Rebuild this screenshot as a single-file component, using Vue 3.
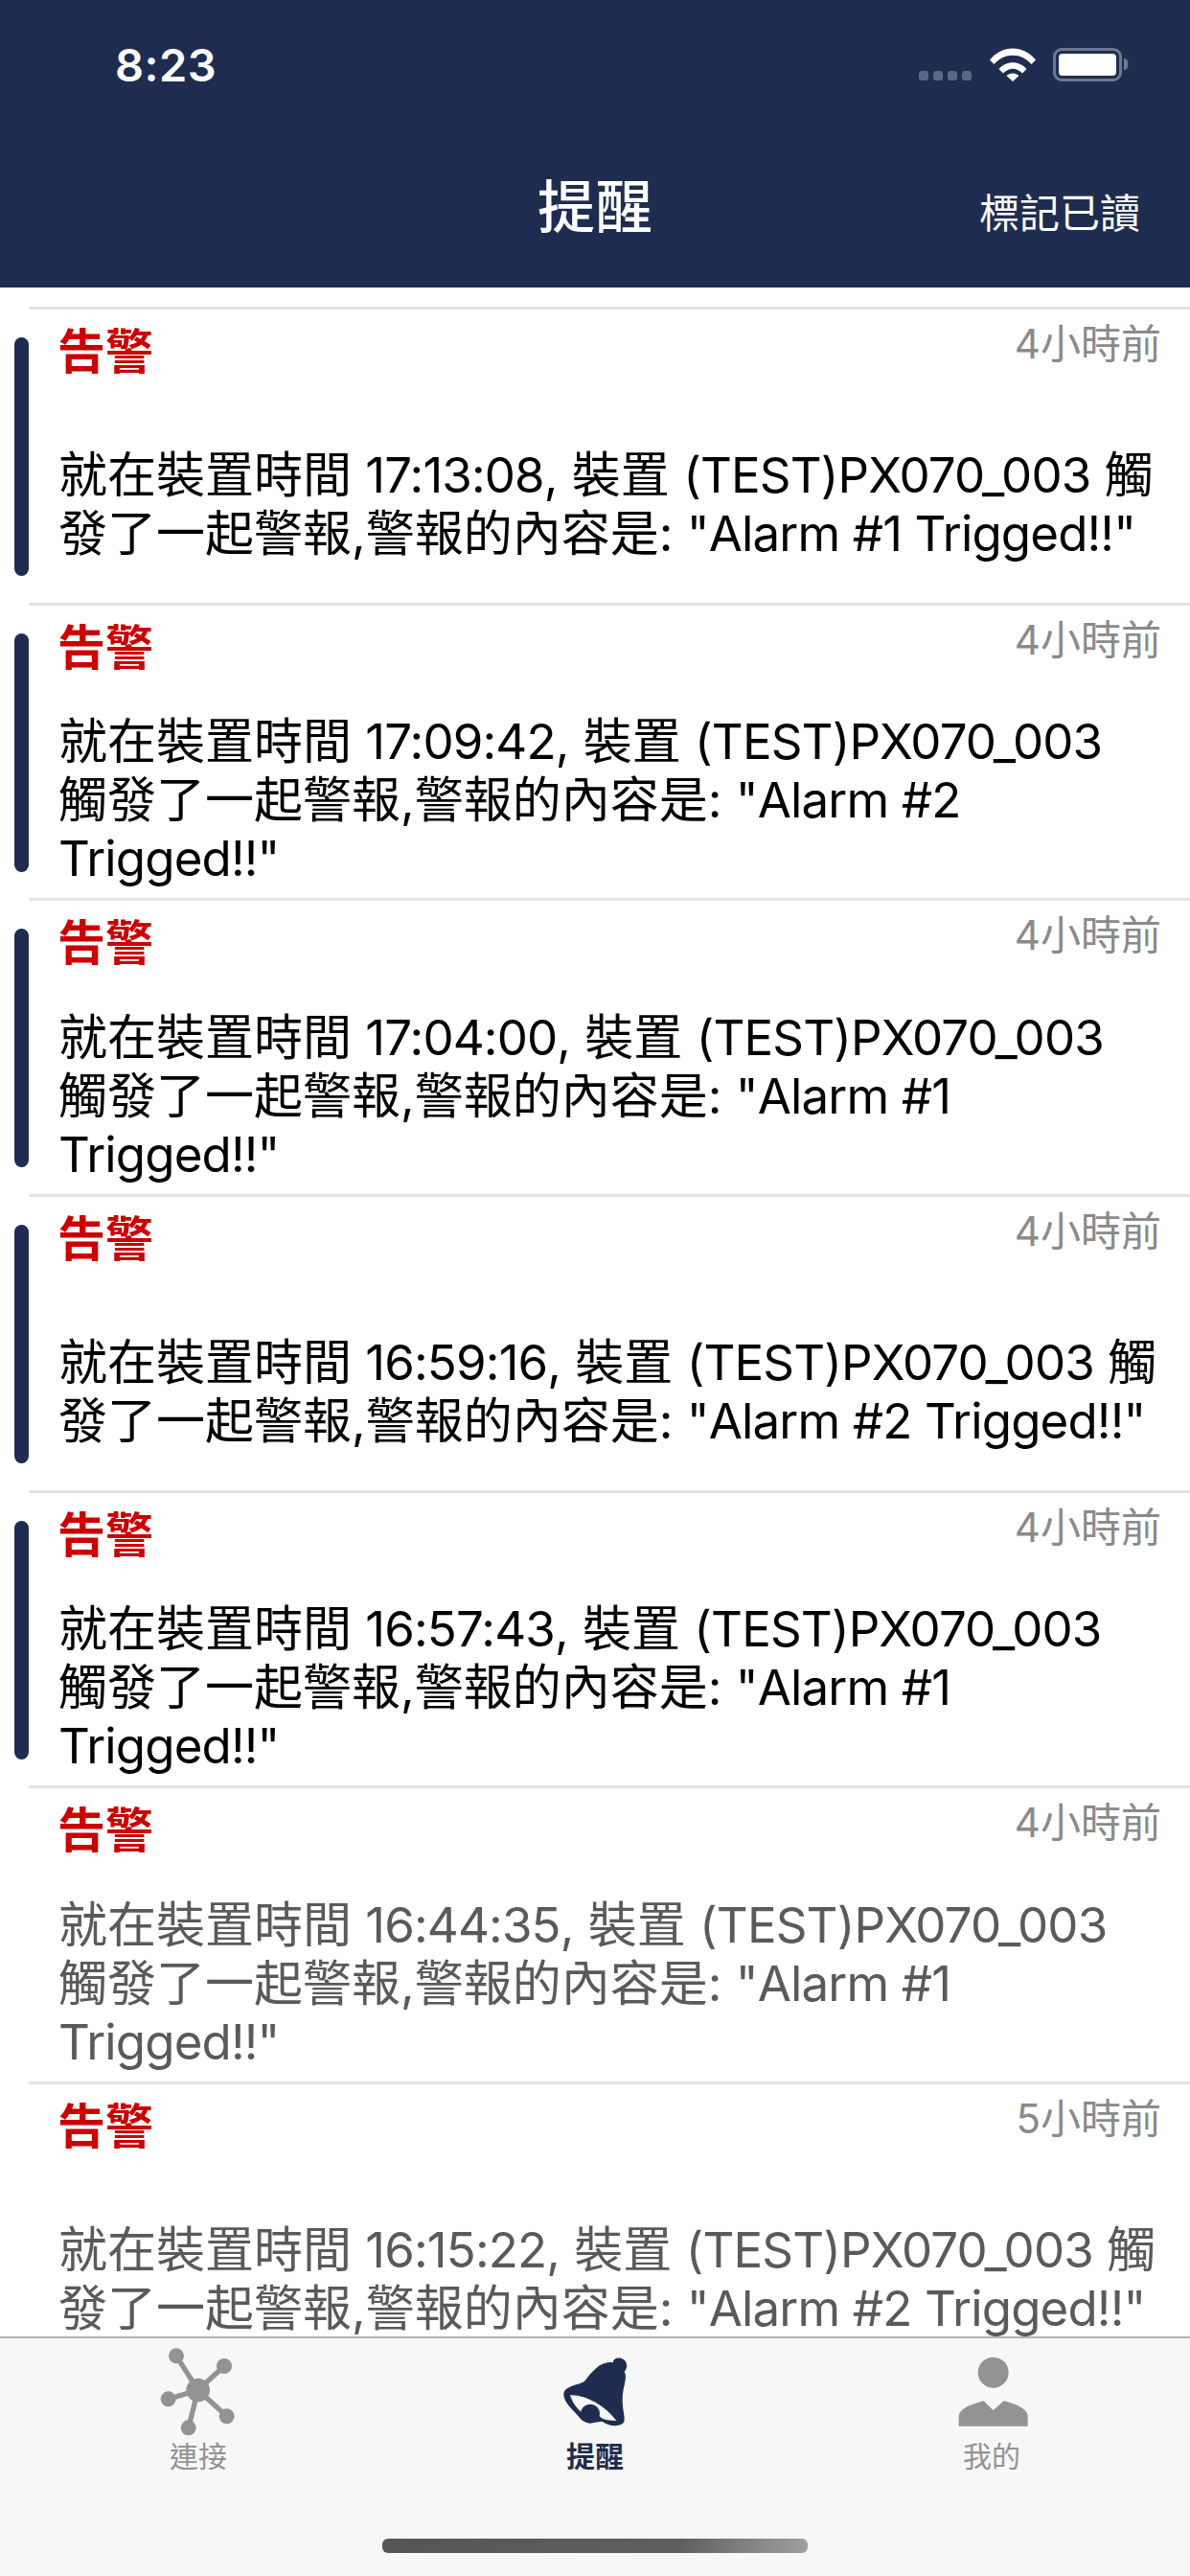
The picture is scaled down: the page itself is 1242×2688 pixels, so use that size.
<template>
  <div class="page">
    <header class="top">
      <div class="status">
        <span class="clock">8:23</span>
        <div class="status-icons">
          <div class="signal"><i></i><i></i><i></i><i></i></div>
          <svg class="wifi" width="48" height="35" viewBox="0 0 48 35">
            <path d="M0 12.5C13 -3.5 35 -3.5 48 12.5L43.5 17C33 4.5 15 4.5 4.500 17Z" fill="#fff" />
            <path d="M9.500 22C17 13 31 13 38.500 22L34 26.500C28 20 20 20 14 26.500Z" fill="#fff" />
            <path d="M17.500 29C21 25.500 27 25.500 30.500 29L24 35Z" fill="#fff" />
          </svg>
          <div class="battery"><div class="battery-fill"></div></div>
          <div class="battery-nub"></div>
        </div>
      </div>
      <div class="nav">
        <h1 class="nav-title">提醒</h1>
        <button class="nav-action">標記已讀</button>
      </div>
    </header>

    <main class="list">
      <div
        v-for="(item, i) in alerts"
        :key="i"
        class="row"
        :class="{ unread: item.unread }"
      >
        <span v-if="item.unread" class="bar"></span>
        <div class="row-head">
          <span class="row-title">告警</span>
          <span class="row-time">{{ item.time }}</span>
        </div>
        <div class="row-body">
          <p>就在裝置時間 <span class="latin">{{ item.clock }}</span>, 裝置 <span class="latin">(TEST)PX070_003</span> 觸發了一起警報,警報的內容是: <span class="latin">"Alarm #{{ item.alarm }} Trigged!!"</span></p>
        </div>
      </div>
    </main>

    <nav class="tabs">
      <div class="tab">
        <svg class="tab-icon" viewBox="21 0 420 270">
          <g fill="#939393" stroke="#939393" stroke-width="16">
            <line x1="230" y1="132" x2="162" y2="25" />
            <line x1="230" y1="132" x2="312" y2="57" />
            <line x1="230" y1="132" x2="137" y2="160" />
            <line x1="230" y1="132" x2="320" y2="214" />
            <line x1="230" y1="132" x2="200" y2="250" />
          </g>
          <g fill="#939393">
            <circle cx="230" cy="132" r="37" />
            <circle cx="162" cy="25" r="24" />
            <circle cx="312" cy="57" r="24" />
            <circle cx="137" cy="160" r="24" />
            <circle cx="320" cy="214" r="24" />
            <circle cx="200" cy="250" r="24" />
          </g>
        </svg>
        <span class="tab-label">連接</span>
      </div>
      <div class="tab active">
        <svg class="tab-icon" viewBox="-27 0 420 270">
          <path fill="#1e2d4f" d="M240 46C205 38 175 70 150 105C125 118 85 120 85 146C86 172 112 190 138 222C150 240 190 232 205 230C225 245 262 250 274 232C280 215 262 180 272 130C278 105 282 85 275 74C282 68 283 58 282 52C280 35 258 26 244 36C240 39 240 42 240 46Z" />
          <path fill="#f7f7f7" d="M105 148C150 145 215 180 250 228C215 228 200 222 190 205C170 180 150 195 145 205C125 190 112 170 105 148Z" />
          <circle cx="168" cy="206" r="30" fill="#1e2d4f" />
        </svg>
        <span class="tab-label">提醒</span>
      </div>
      <div class="tab">
        <svg class="tab-icon" viewBox="-20 0 420 270">
          <circle cx="195" cy="77" r="48" fill="#939393" />
          <path fill="#939393" d="M87 245V215C87 190 130 175 165 166L195 195L228 166C265 175 303 190 303 215V245Z" />
        </svg>
        <span class="tab-label">我的</span>
      </div>
      <div class="home-indicator"></div>
    </nav>
  </div>
</template>

<script setup>
const alerts = [
  { time: '4小時前', clock: '17:13:08', alarm: 1, unread: true },
  { time: '4小時前', clock: '17:09:42', alarm: 2, unread: true },
  { time: '4小時前', clock: '17:04:00', alarm: 1, unread: true },
  { time: '4小時前', clock: '16:59:16', alarm: 2, unread: true },
  { time: '4小時前', clock: '16:57:43', alarm: 1, unread: true },
  { time: '4小時前', clock: '16:44:35', alarm: 1, unread: false },
  { time: '5小時前', clock: '16:15:22', alarm: 2, unread: false },
]
</script>

<style>
html, body {
  margin: 0;
  background: #fff;
}
</style>

<style scoped>
.page {
  width: 1242px;
  height: 2688px;
  display: flex;
  flex-direction: column;
  overflow: hidden;
  font-family: Inter, "Noto Sans CJK TC", sans-serif;
  background: #fff;
}

/* header */
.top {
  height: 300px;
  flex-shrink: 0;
  background: #1e2d4f;
  color: #fff;
}
.status {
  height: 130px;
  box-sizing: border-box;
  padding: 46px 65px 0 120px;
  display: flex;
  justify-content: space-between;
  align-items: flex-start;
}
.clock {
  font-size: 47px;
  font-weight: 600;
  line-height: 44px;
  letter-spacing: 0.5px;
}
.status-icons {
  display: flex;
  align-items: flex-end;
  padding-top: 4px;
}
.signal {
  display: flex;
  gap: 5px;
  margin-right: 19px;
  margin-bottom: 1px;
}
.signal i {
  display: block;
  width: 10px;
  height: 10px;
  border-radius: 3px;
  background: #5a6785;
}
.wifi {
  display: block;
  margin-right: 18px;
}
.battery {
  width: 72px;
  height: 35px;
  box-sizing: border-box;
  border: 3px solid #6d7890;
  border-radius: 9px;
  padding: 3px;
}
.battery-fill {
  height: 100%;
  border-radius: 4px;
  background: #fff;
}
.battery-nub {
  width: 4px;
  height: 12px;
  margin: 0 0 12px 2px;
  background: #6d7890;
  border-radius: 0 4px 4px 0;
}
.nav {
  position: relative;
  height: 170px;
  display: flex;
  align-items: flex-start;
  justify-content: flex-end;
  padding-right: 52px;
}
.nav-title {
  position: absolute;
  left: 0;
  right: 0;
  top: 46px;
  margin: 0;
  text-align: center;
  font-size: 60px;
  line-height: 80px;
  font-weight: 500;
}
.nav-action {
  margin-top: 68px;
  padding: 0;
  border: none;
  background: none;
  color: #fff;
  font: inherit;
  font-size: 42px;
  line-height: 50px;
}

/* list */
.list {
  flex: 1;
  min-height: 0;
  overflow: hidden;
  padding-top: 20px;
}
.row {
  position: relative;
  height: 308.67px;
  box-sizing: border-box;
  border-top: 3px solid #e3e3e3;
  margin-left: 30px;
  padding: 0 30px 0 31px;
  color: #5a5a5a;
}
.row.unread {
  color: #000;
}
.bar {
  position: absolute;
  left: -15px;
  top: 29px;
  width: 15px;
  height: 249px;
  border-radius: 8px;
  background: #1e2d4f;
}
.row-head {
  height: 108px;
  display: flex;
  justify-content: space-between;
  align-items: flex-start;
}
.row-title {
  font-size: 50px;
  font-weight: 600;
  line-height: 60px;
  margin-top: 14px;
  margin-left: -1px;
  color: #cc0000;
}
.row-time {
  font-size: 42px;
  line-height: 50px;
  margin-top: 11px;
  color: #8a8a8a;
}
.row-body {
  height: 190px;
  display: flex;
  align-items: center;
  font-size: 51px;
  line-height: 61px;
}
.row-body p {
  margin: 0;
}
.latin {
  letter-spacing: -0.85px;
}

/* tab bar */
.tabs {
  position: relative;
  height: 250px;
  flex-shrink: 0;
  box-sizing: border-box;
  border-top: 2px solid #b2b2b2;
  background: #f7f7f7;
  display: flex;
  align-items: flex-start;
  padding-top: 10px;
}
.tab {
  flex: 1;
  display: flex;
  flex-direction: column;
  align-items: center;
  color: #939393;
}
.tab.active {
  color: #1e2d4f;
  font-weight: 700;
}
.tab-icon {
  display: block;
  width: 140px;
  height: 90px;
  overflow: visible;
}
.tab-label {
  font-size: 30px;
  line-height: 40px;
  margin-top: 3px;
}
.home-indicator {
  position: absolute;
  left: 399px;
  top: 209px;
  width: 444px;
  height: 15px;
  border-radius: 6px;
  background: linear-gradient(90deg, #555 0%, #5f5f5f 70%, #a0a0a0 100%);
}
</style>
